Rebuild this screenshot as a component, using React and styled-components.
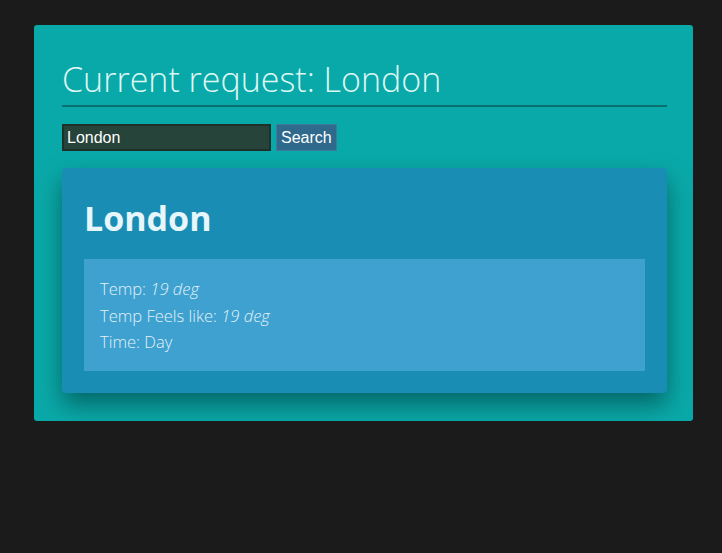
import React, { useState } from 'react';
import styled, { createGlobalStyle } from 'styled-components';

const GlobalStyle = createGlobalStyle`
  html, body {
    margin: 0;
    padding: 0;
    background-color: #1b1b1b;
  }
  body {
    font-family: "Open Sans", "Noto Sans", sans-serif;
  }
`;

const Page = styled.div`
  padding: 25px 29px 0 34px;
`;

const Panel = styled.div`
  width: 659px;
  box-sizing: border-box;
  background-color: #0aa9a9;
  border-radius: 3px;
  padding: 30px 26px 28px 28px;
`;

const Title = styled.h1`
  margin: 0;
  padding-bottom: 2px;
  font-family: "Open Sans", "Noto Sans", sans-serif;
  font-weight: 300;
  font-size: 34px;
  line-height: 48px;
  color: #dff7f4;
  border-bottom: 2px solid #096f70;
`;

const SearchRow = styled.form`
  display: flex;
  align-items: center;
  gap: 5px;
  margin-top: 17px;
`;

const SearchInput = styled.input`
  width: 209px;
  height: 27px;
  box-sizing: border-box;
  background-color: #27443b;
  border: 2px solid #1f2f2a;
  color: #ffffff;
  font-family: "Liberation Sans", Arial, sans-serif;
  font-size: 16px;
  padding: 0 3px;
  outline: none;
`;

const SearchButton = styled.button`
  height: 27px;
  box-sizing: border-box;
  background-color: #2f6a8c;
  border: 1px solid #3c7aa0;
  color: #ffffff;
  font-family: "Liberation Sans", Arial, sans-serif;
  font-size: 16px;
  padding: 0 4px;
  cursor: pointer;
`;

const Card = styled.div`
  margin-top: 17px;
  background-color: #1a8db5;
  border-radius: 4px;
  padding: 22px;
  box-shadow: 0 12px 24px rgba(0, 50, 50, 0.55);
`;

const CityName = styled.h2`
  margin: 0;
  font-family: "Open Sans", "Noto Sans", sans-serif;
  font-weight: 700;
  font-size: 34px;
  line-height: 56px;
  color: #e6f6fb;
`;

const Details = styled.div`
  margin-top: 13px;
  background-color: #3ea1d0;
  padding: 17px 16px 15px 16px;
`;

const DetailLine = styled.div`
  font-family: "Open Sans", "Noto Sans", sans-serif;
  font-weight: 300;
  font-size: 16.5px;
  line-height: 26.5px;
  color: #e3f1f8;

  em {
    font-style: italic;
  }
`;

export default function App() {
  const [query, setQuery] = useState('London');

  return (
    <Page>
      <GlobalStyle />
      <Panel>
        <Title>Current request: London</Title>
        <SearchRow onSubmit={(e) => e.preventDefault()}>
          <SearchInput value={query} onChange={(e) => setQuery(e.target.value)} />
          <SearchButton type="submit">Search</SearchButton>
        </SearchRow>
        <Card>
          <CityName>London</CityName>
          <Details>
            <DetailLine>Temp: <em>19 deg</em></DetailLine>
            <DetailLine>Temp Feels like: <em>19 deg</em></DetailLine>
            <DetailLine>Time: Day</DetailLine>
          </Details>
        </Card>
      </Panel>
    </Page>
  );
}
